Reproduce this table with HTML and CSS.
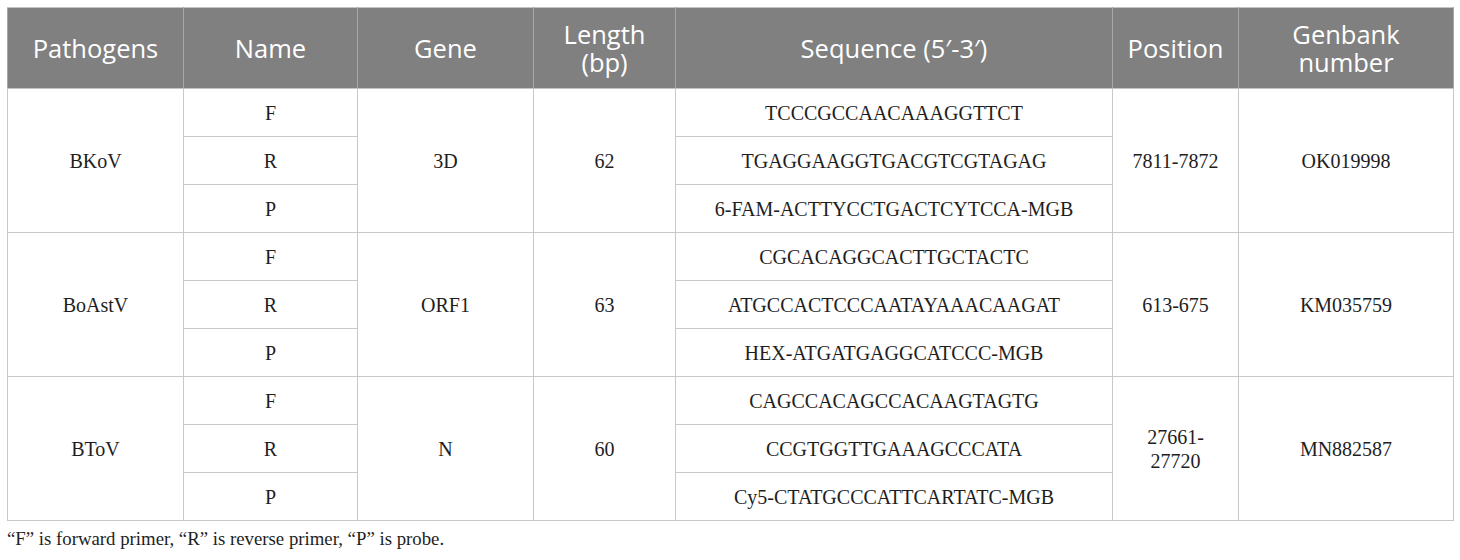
FILE: index.html
```html
<!DOCTYPE html>
<html lang="en">
<head>
<meta charset="utf-8">
<title>Primers and probes</title>
<link rel="stylesheet" href="styles.css">
</head>
<body>
<div class="wrap">
<table class="primers">
  <colgroup>
    <col class="c1"><col class="c2"><col class="c3"><col class="c4"><col class="c5"><col class="c6"><col class="c7">
  </colgroup>
  <thead>
    <tr>
      <th>Pathogens</th>
      <th>Name</th>
      <th>Gene</th>
      <th>Length<br>(bp)</th>
      <th>Sequence (5′-3′)</th>
      <th>Position</th>
      <th>Genbank<br>number</th>
    </tr>
  </thead>
  <tbody>
    <tr>
      <td rowspan="3">BKoV</td>
      <td>F</td>
      <td rowspan="3">3D</td>
      <td rowspan="3">62</td>
      <td>TCCCGCCAACAAAGGTTCT</td>
      <td rowspan="3">7811-7872</td>
      <td rowspan="3">OK019998</td>
    </tr>
    <tr><td>R</td><td>TGAGGAAGGTGACGTCGTAGAG</td></tr>
    <tr><td>P</td><td>6-FAM-ACTTYCCTGACTCYTCCA-MGB</td></tr>
    <tr>
      <td rowspan="3">BoAstV</td>
      <td>F</td>
      <td rowspan="3">ORF1</td>
      <td rowspan="3">63</td>
      <td>CGCACAGGCACTTGCTACTC</td>
      <td rowspan="3">613-675</td>
      <td rowspan="3">KM035759</td>
    </tr>
    <tr><td>R</td><td>ATGCCACTCCCAATAYAAACAAGAT</td></tr>
    <tr><td>P</td><td>HEX-ATGATGAGGCATCCC-MGB</td></tr>
    <tr>
      <td rowspan="3">BToV</td>
      <td>F</td>
      <td rowspan="3">N</td>
      <td rowspan="3">60</td>
      <td>CAGCCACAGCCACAAGTAGTG</td>
      <td rowspan="3">27661-<br>27720</td>
      <td rowspan="3">MN882587</td>
    </tr>
    <tr><td>R</td><td>CCGTGGTTGAAAGCCCATA</td></tr>
    <tr><td>P</td><td>Cy5-CTATGCCCATTCARTATC-MGB</td></tr>
  </tbody>
</table>
<p class="note">“F” is forward primer, “R” is reverse primer, “P” is probe.</p>
</div>
</body>
</html>
```

FILE: styles.css
```css
html, body {
  margin: 0;
  padding: 0;
  background: #ffffff;
}

.wrap {
  padding: 7px 0 0 7px;
}

.primers {
  border-collapse: collapse;
  table-layout: fixed;
  width: 1446px;
  border: 1px solid #c4c4c4;
}

.c1 { width: 176px; }
.c2 { width: 174px; }
.c3 { width: 176px; }
.c4 { width: 142px; }
.c5 { width: 437px; }
.c6 { width: 126px; }
.c7 { width: 215px; }

.primers th {
  background: #808080;
  color: #ffffff;
  font-family: "Open Sans", "Noto Sans", sans-serif;
  font-weight: 400;
  font-size: 25.5px;
  line-height: 28px;
  height: 80px;
  padding: 0 6px;
  text-align: center;
  vertical-align: middle;
  border: 1px solid #c4c4c4;
  border-left-color: #a6a6a6;
  border-right-color: #a6a6a6;
}

.primers td {
  font-family: "Liberation Serif", "Times New Roman", serif;
  font-size: 20px;
  line-height: 24px;
  color: #1e1e1e;
  text-align: center;
  vertical-align: middle;
  height: 47px;
  padding: 0 8px;
  border: 1px solid #c8c8c8;
}

.note {
  margin: 5px 0 0 0;
  font-family: "Liberation Serif", "Times New Roman", serif;
  font-size: 18.8px;
  line-height: 26px;
  color: #1e1e1e;
}
```
